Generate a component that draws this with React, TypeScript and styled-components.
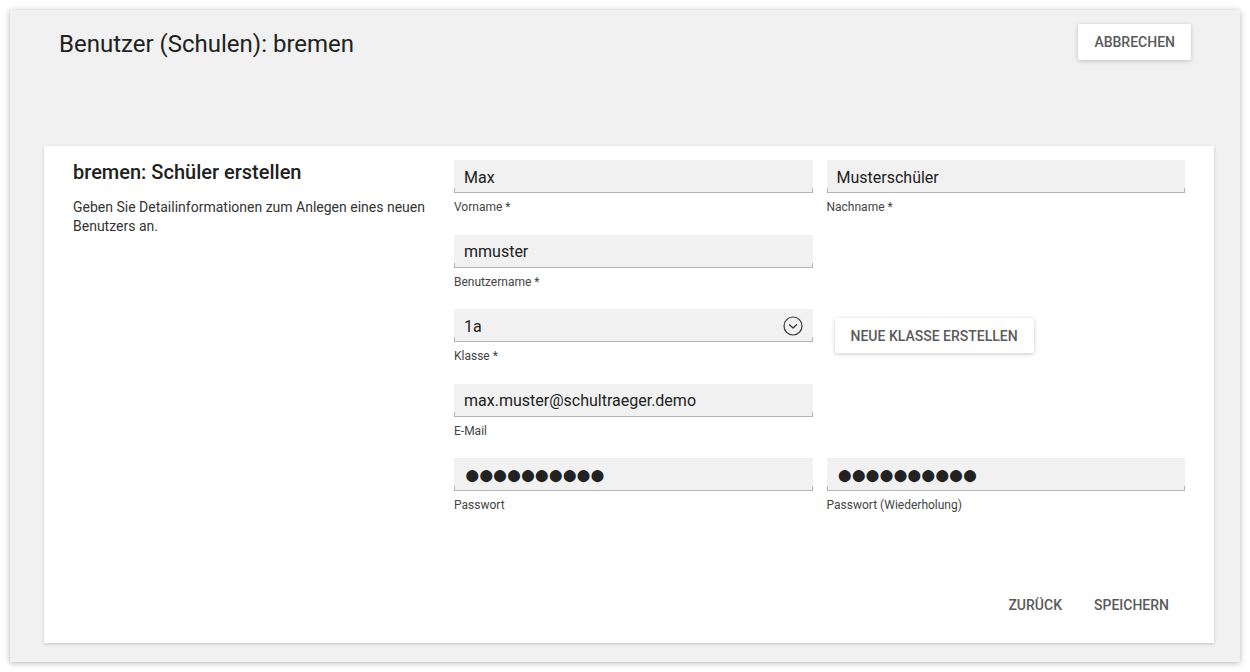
import React from "react";
import styled, { createGlobalStyle } from "styled-components";

const GlobalStyle = createGlobalStyle`
  html, body { margin: 0; padding: 0; background: #ffffff; }
  body { font-family: Roboto, "Noto Sans", "Liberation Sans", sans-serif; color: #212121; }
  * { box-sizing: border-box; }
`;

const Page = styled.div`
  padding: 10px;
  width: 1250px;
  height: 672px;
`;

const Panel = styled.div`
  height: 652px;
  background: #f1f1f1;
  box-shadow: 0 1px 6px rgba(0, 0, 0, 0.3);
  display: flex;
  flex-direction: column;
`;

const Header = styled.div`
  display: flex;
  justify-content: space-between;
  align-items: flex-start;
  padding: 14px 49px 0 49px;
  height: 136px;
`;

const Title = styled.h1`
  margin: 0;
  padding-top: 2px;
  font-size: 24px;
  line-height: 36px;
  font-weight: 400;
  color: #212121;
`;

const RaisedButton = styled.button<{ $height?: number }>`
  font-family: Roboto, "Noto Sans", "Liberation Sans", sans-serif;
  font-size: 14px;
  font-weight: 500;
  text-transform: uppercase;
  color: #5a5a5a;
  background: #ffffff;
  border: none;
  border-radius: 2px;
  height: ${(p) => p.$height ?? 36}px;
  padding: 0 16px;
  box-shadow: 0 1px 4px rgba(0, 0, 0, 0.22);
  cursor: pointer;
`;

const FlatButton = styled.button`
  font-family: Roboto, "Noto Sans", "Liberation Sans", sans-serif;
  font-size: 14px;
  font-weight: 500;
  text-transform: uppercase;
  color: #5a5a5a;
  background: transparent;
  border: none;
  height: 36px;
  padding: 0 16px;
  cursor: pointer;
`;

const Card = styled.div`
  flex: 1;
  margin: 0 26px 19px 34px;
  background: #ffffff;
  box-shadow: 0 1px 3px rgba(0, 0, 0, 0.2);
  padding: 14px 29px 20px 29px;
  display: flex;
  flex-direction: column;
`;

const CardBody = styled.div`
  display: grid;
  grid-template-columns: 352px 1fr;
  column-gap: 29px;
`;

const Intro = styled.div`
  display: flex;
  flex-direction: column;
`;

const IntroTitle = styled.h2`
  margin: 0;
  font-size: 20px;
  line-height: 24px;
  font-weight: 500;
  color: #212121;
`;

const IntroText = styled.p`
  margin: 14px 0 0 0;
  font-size: 14px;
  line-height: 19px;
  color: #333333;
`;

const FormGrid = styled.div`
  display: grid;
  grid-template-columns: 1fr 1fr;
  column-gap: 14px;
`;

const Field = styled.div`
  display: flex;
  flex-direction: column;
  margin-bottom: 19.5px;
`;

const InputBox = styled.div`
  position: relative;
  height: 33px;
  background: #f1f1f1;
  border-bottom: 1px solid #b4b4b4;
  padding: 2px 10px 0 10px;
  display: flex;
  align-items: center;
  justify-content: space-between;
  font-size: 16px;
  color: #212121;

  &::before,
  &::after {
    content: "";
    position: absolute;
    bottom: 0;
    width: 1px;
    height: 4px;
    background: #b4b4b4;
  }
  &::before { left: 0; }
  &::after { right: 0; }
`;

const Dots = styled.span`
  display: inline-block;
  font-size: 28px;
  line-height: 20px;
  letter-spacing: -3px;
  color: #222222;
  padding-top: 2px;
`;

const Label = styled.label`
  margin-top: 6px;
  font-size: 12px;
  line-height: 16px;
  height: 16px;
  color: #444444;
`;

const SideAction = styled.div`
  padding: 9px 0 0 8px;
`;

const Footer = styled.div`
  margin-top: auto;
  display: flex;
  justify-content: flex-end;
`;

const ChevronCircle = () => (
  <svg width="20" height="20" viewBox="0 0 20 20" fill="none">
    <circle cx="10" cy="10" r="9" stroke="#333" strokeWidth="1.2" />
    <path d="M6.5 8.7 L10 12 L13.5 8.7" stroke="#333" strokeWidth="1.2" strokeLinecap="round" strokeLinejoin="round" />
  </svg>
);

const TextField = ({ value, label, children }: { value?: React.ReactNode; label: string; children?: React.ReactNode }) => (
  <Field>
    <InputBox>
      <span>{value}</span>
      {children}
    </InputBox>
    <Label>{label}</Label>
  </Field>
);

const Empty = () => <div />;

export default function App() {
  const dots = "●●●●●●●●●●";
  return (
    <>
      <GlobalStyle />
      <Page>
        <Panel>
          <Header>
            <Title>Benutzer (Schulen): bremen</Title>
            <RaisedButton>Abbrechen</RaisedButton>
          </Header>
          <Card>
            <CardBody>
              <Intro>
                <IntroTitle>bremen: Schüler erstellen</IntroTitle>
                <IntroText>Geben Sie Detailinformationen zum Anlegen eines neuen Benutzers an.</IntroText>
              </Intro>
              <FormGrid>
                <TextField value="Max" label="Vorname *" />
                <TextField value="Musterschüler" label="Nachname *" />
                <TextField value="mmuster" label="Benutzername *" />
                <Empty />
                <TextField value="1a" label="Klasse *">
                  <ChevronCircle />
                </TextField>
                <SideAction>
                  <RaisedButton $height={35}>Neue Klasse erstellen</RaisedButton>
                </SideAction>
                <TextField value="max.muster@schultraeger.demo" label="E-Mail" />
                <Empty />
                <TextField value={<Dots>{dots}</Dots>} label="Passwort" />
                <TextField value={<Dots>{dots}</Dots>} label="Passwort (Wiederholung)" />
              </FormGrid>
            </CardBody>
            <Footer>
              <FlatButton>Zurück</FlatButton>
              <FlatButton>Speichern</FlatButton>
            </Footer>
          </Card>
        </Panel>
      </Page>
    </>
  );
}
